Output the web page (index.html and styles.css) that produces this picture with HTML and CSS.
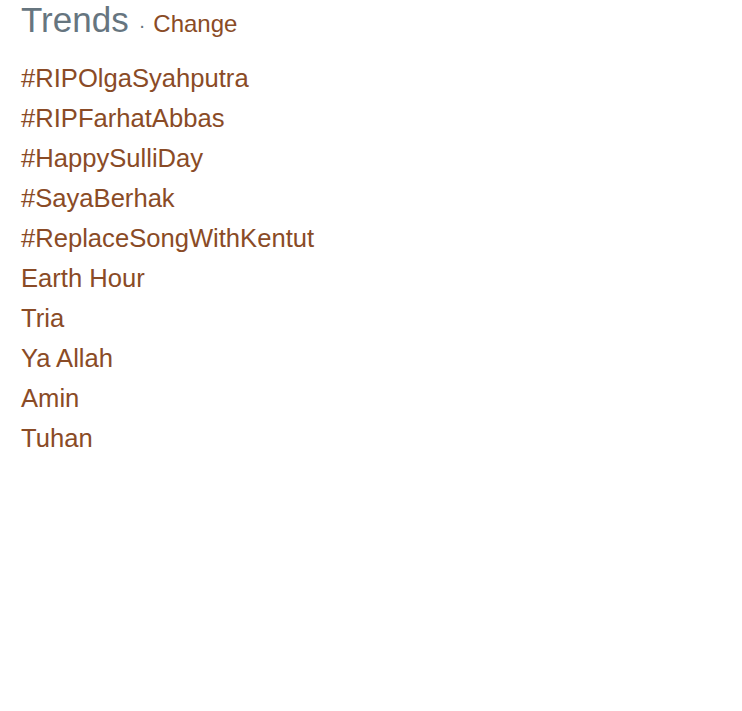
FILE: index.html
```html
<!DOCTYPE html>
<html>
<head>
<meta charset="utf-8">
<link rel="stylesheet" href="styles.css">
</head>
<body>
<div class="trends">
  <div class="header">
    <h3 class="title">Trends</h3>
    <span class="dot">·</span>
    <a class="change" href="#">Change</a>
  </div>
  <ul class="list">
    <li><a href="#">#RIPOlgaSyahputra</a></li>
    <li><a href="#">#RIPFarhatAbbas</a></li>
    <li><a href="#">#HappySulliDay</a></li>
    <li><a href="#">#SayaBerhak</a></li>
    <li><a href="#">#ReplaceSongWithKentut</a></li>
    <li><a href="#">Earth Hour</a></li>
    <li><a href="#">Tria</a></li>
    <li><a href="#">Ya Allah</a></li>
    <li><a href="#">Amin</a></li>
    <li><a href="#">Tuhan</a></li>
  </ul>
</div>
</body>
</html>
```
FILE: styles.css
```css
html, body {
  margin: 0;
  padding: 0;
  background: #ffffff;
}
body {
  font-family: "Liberation Sans", Arial, sans-serif;
}
.trends {
  padding: 0 21px;
}
.header {
  display: flex;
  align-items: baseline;
  height: 58px;
}
.title {
  margin: 0;
  font-size: 35px;
  font-weight: normal;
  color: #66757f;
  line-height: 40px;
}
.dot {
  color: #66757f;
  font-size: 20px;
  margin: 0 8px 0 10px;
}
.change {
  color: #8a4b26;
  text-decoration: none;
  font-size: 24px;
}
.list {
  list-style: none;
  margin: 0;
  padding: 0;
}
.list li {
  height: 40px;
  line-height: 40px;
  font-size: 25.6px;
}
.list a {
  color: #8a4b26;
  text-decoration: none;
}
```
